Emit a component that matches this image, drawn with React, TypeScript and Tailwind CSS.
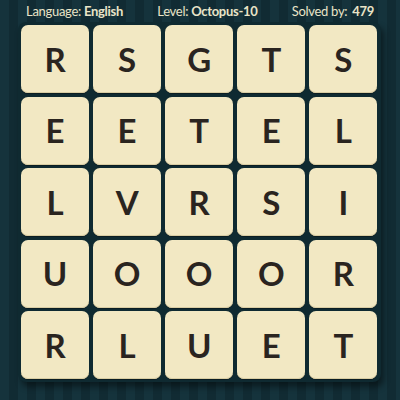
const rows = ['RSGTS', 'EETEL', 'LVRSI', 'UOOOR', 'RLUET'];

function Tile({ ch }: { ch: string }) {
  return (
    <div className="flex h-[68px] w-[68px] items-center justify-center rounded-[7px] bg-[#f2e8c3] shadow-[0_1px_0_#0b1d22,inset_0_-1px_0_#d9cda3]">
      <span className="text-[33px] font-bold leading-none text-[#2a241f]">{ch}</span>
    </div>
  );
}

export default function App() {
  return (
    <div
      className="h-[400px] w-[400px] overflow-hidden bg-[#14313a] bg-[repeating-linear-gradient(90deg,#15333c_0px,#15333c_9px,#112b33_9px,#112b33_18px)] text-[#e9e4c8]"
      style={{ fontFamily: 'Lato, "Noto Sans", sans-serif' }}
    >
      <div className="flex h-[22px] items-center justify-between pl-[26px] pr-[26px] pt-[1px] text-[13px] tracking-[-0.3px]">
        <span>
          Language: <b className="font-bold">English</b>
        </span>
        <span>
          Level: <b className="font-bold">Octopus-10</b>
        </span>
        <span>
          Solved by: <b className="ml-[2px] font-bold">479</b>
        </span>
      </div>
      <div className="ml-[18px] w-[363px] rounded-[8px] bg-[#0f2a31] p-[3px] shadow-[3px_5px_6px_rgba(0,0,0,0.45)]">
        <div className="grid grid-cols-5 gap-[3.5px]">
          {rows.map((r, i) =>
            r.split('').map((c, j) => <Tile key={i + '-' + j} ch={c} />)
          )}
        </div>
      </div>
    </div>
  );
}
